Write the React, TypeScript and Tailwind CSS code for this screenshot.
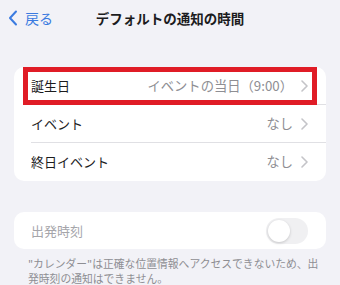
import React from 'react';

const font = { fontFamily: '"Noto Sans CJK JP", "Noto Sans", sans-serif' };

function Chevron() {
  return (
    <svg width="7" height="12" viewBox="0 0 7 12" className="ml-[8px] shrink-0">
      <path d="M1 1l5 5-5 5" fill="none" stroke="#c4c4c8" strokeWidth="1.6" strokeLinecap="round" strokeLinejoin="round" />
    </svg>
  );
}

function Row({ label, value, divider }: { label: string; value: string; divider?: boolean }) {
  return (
    <div className="relative flex h-[38px] items-center pl-[17px] pr-[18px]">
      <span className="text-[13px] text-[#1c1c1e]">{label}</span>
      <span className="ml-auto text-[13.3px] text-[#8e8e93]">{value}</span>
      <Chevron />
      {divider && <div className="absolute bottom-0 left-[17px] right-0 h-px bg-[#e0e0e4]" />}
    </div>
  );
}

export default function App() {
  return (
    <div className="h-[285px] w-[340px] overflow-hidden bg-[#f2f2f7]" style={font}>
      {/* nav bar */}
      <div className="relative flex h-[36px] items-center">
        <div className="flex items-center pl-[8px] text-[#3b7be0]">
          <svg width="10" height="16" viewBox="0 0 10 16">
            <path d="M8 1.5L2 8l6 6.5" fill="none" stroke="#3b7be0" strokeWidth="2" strokeLinecap="round" strokeLinejoin="round" />
          </svg>
          <span className="ml-[7px] text-[14px]">戻る</span>
        </div>
        <div className="absolute inset-x-0 text-center text-[13.5px] font-bold text-[#1c1c1e]">デフォルトの通知の時間</div>
      </div>

      <div className="relative mx-[14px] mt-[31px] rounded-[10px] bg-white">
        <Row label="誕生日" value="イベントの当日（9:00）" divider />
        <Row label="イベント" value="なし" divider />
        <Row label="終日イベント" value="なし" />
        <div className="pointer-events-none absolute left-[9px] right-[9px] top-0 h-[38px] border-[5px] border-[#e01c26]" />
      </div>

      <div className="mx-[14px] mt-[31px] flex h-[37px] items-center rounded-[10px] bg-white pl-[17px] pr-[18px]">
        <span className="text-[13px] text-[#a5a5aa]">出発時刻</span>
        <div className="ml-auto flex h-[26px] w-[42px] items-center rounded-full bg-[#f0f0f2] p-[2px]">
          <div className="h-[22px] w-[22px] rounded-full bg-white shadow-[0_1px_3px_rgba(0,0,0,0.18)]" />
        </div>
      </div>

      <div className="mt-[7px] whitespace-nowrap pl-[28px] text-[10.8px] leading-[15px] text-[#8e8e93]">
        "カレンダー"は正確な位置情報へアクセスできないため、出
        <br />
        発時刻の通知はできません。
      </div>
    </div>
  );
}
